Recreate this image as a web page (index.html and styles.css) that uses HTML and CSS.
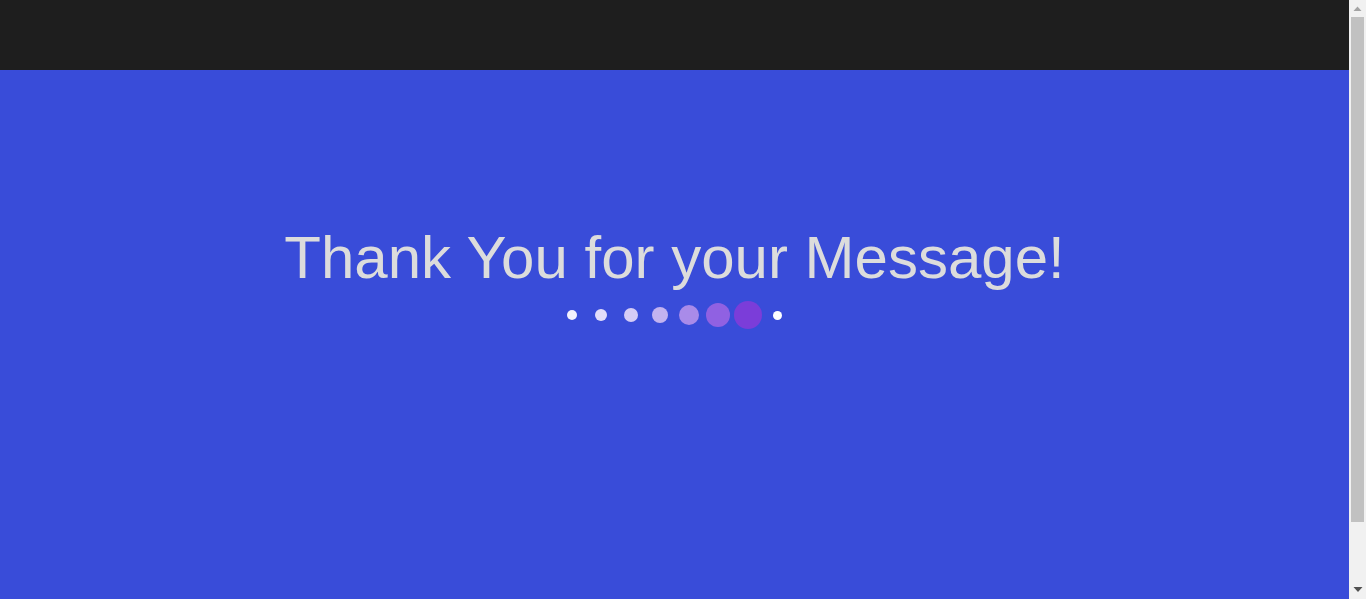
FILE: index.html
```html
<!DOCTYPE html>
<html lang="en">
<head>
<meta charset="utf-8">
<title>Thank You</title>
<link rel="stylesheet" href="styles.css">
</head>
<body>
<div class="page">
  <header class="topbar"></header>
  <main class="hero">
    <h1 class="title">Thank You for your Message!</h1>
    <div class="dots">
      <span class="slot"><span class="dot d1"></span></span>
      <span class="slot"><span class="dot d2"></span></span>
      <span class="slot"><span class="dot d3"></span></span>
      <span class="slot"><span class="dot d4"></span></span>
      <span class="slot"><span class="dot d5"></span></span>
      <span class="slot"><span class="dot d6"></span></span>
      <span class="slot"><span class="dot d7"></span></span>
      <span class="slot"><span class="dot d8"></span></span>
    </div>
  </main>
</div>
<div class="scrollbar" aria-hidden="true">
  <div class="sb-btn">
    <svg width="17" height="17" viewBox="0 0 17 17"><polygon points="4.5,11 12.5,11 8.5,6.5" fill="#a3a3a3"/></svg>
  </div>
  <div class="sb-track"><div class="sb-thumb"></div></div>
  <div class="sb-btn">
    <svg width="17" height="17" viewBox="0 0 17 17"><polygon points="4.5,5 13.5,5 9,10" fill="#505050"/></svg>
  </div>
</div>
</body>
</html>
```
FILE: styles.css
```css
html, body {
  margin: 0;
  padding: 0;
}
body {
  font-family: "Liberation Sans", Arial, sans-serif;
  background: #394cd9;
  padding-right: 17px;
}
.page {
  display: flex;
  flex-direction: column;
}
.topbar {
  height: 70px;
  background: #1e1e1e;
}
.hero {
  height: 100vh;
  box-sizing: border-box;
  padding-top: 153px;
  background: #394cd9;
  display: flex;
  flex-direction: column;
  align-items: center;
}
.title {
  margin: 0;
  font-size: 60px;
  font-weight: 400;
  line-height: 69px;
  color: #dcdcdc;
  text-align: center;
}
.dots {
  margin-top: 9px;
  height: 28px;
  display: flex;
  align-items: center;
  justify-content: center;
}
.slot {
  width: 29.3px;
  display: flex;
  align-items: center;
  justify-content: center;
}
.dot {
  display: block;
  border-radius: 50%;
}
.d1 { width: 10px; height: 10px; background: #f3f1fd; }
.d2 { width: 12px; height: 12px; background: #e2ddfa; }
.d3 { width: 14px; height: 14px; background: #d5ccf6; }
.d4 { width: 16px; height: 16px; background: #c3b3f0; }
.d5 { width: 20px; height: 20px; background: #a98be9; }
.d6 { width: 24px; height: 24px; background: #9061e2; }
.d7 { width: 28px; height: 28px; background: #7b3dd9; }
.d8 { width: 9px; height: 9px; background: #ffffff; }

.scrollbar {
  position: fixed;
  top: 0;
  right: 0;
  width: 17px;
  height: 100vh;
  background: #f1f1f1;
  display: flex;
  flex-direction: column;
}
.sb-btn {
  height: 17px;
  flex: none;
}
.sb-btn svg {
  display: block;
}
.sb-track {
  flex: 1;
  padding: 0 2px;
}
.sb-thumb {
  height: 505px;
  background: #c1c1c1;
}
```
